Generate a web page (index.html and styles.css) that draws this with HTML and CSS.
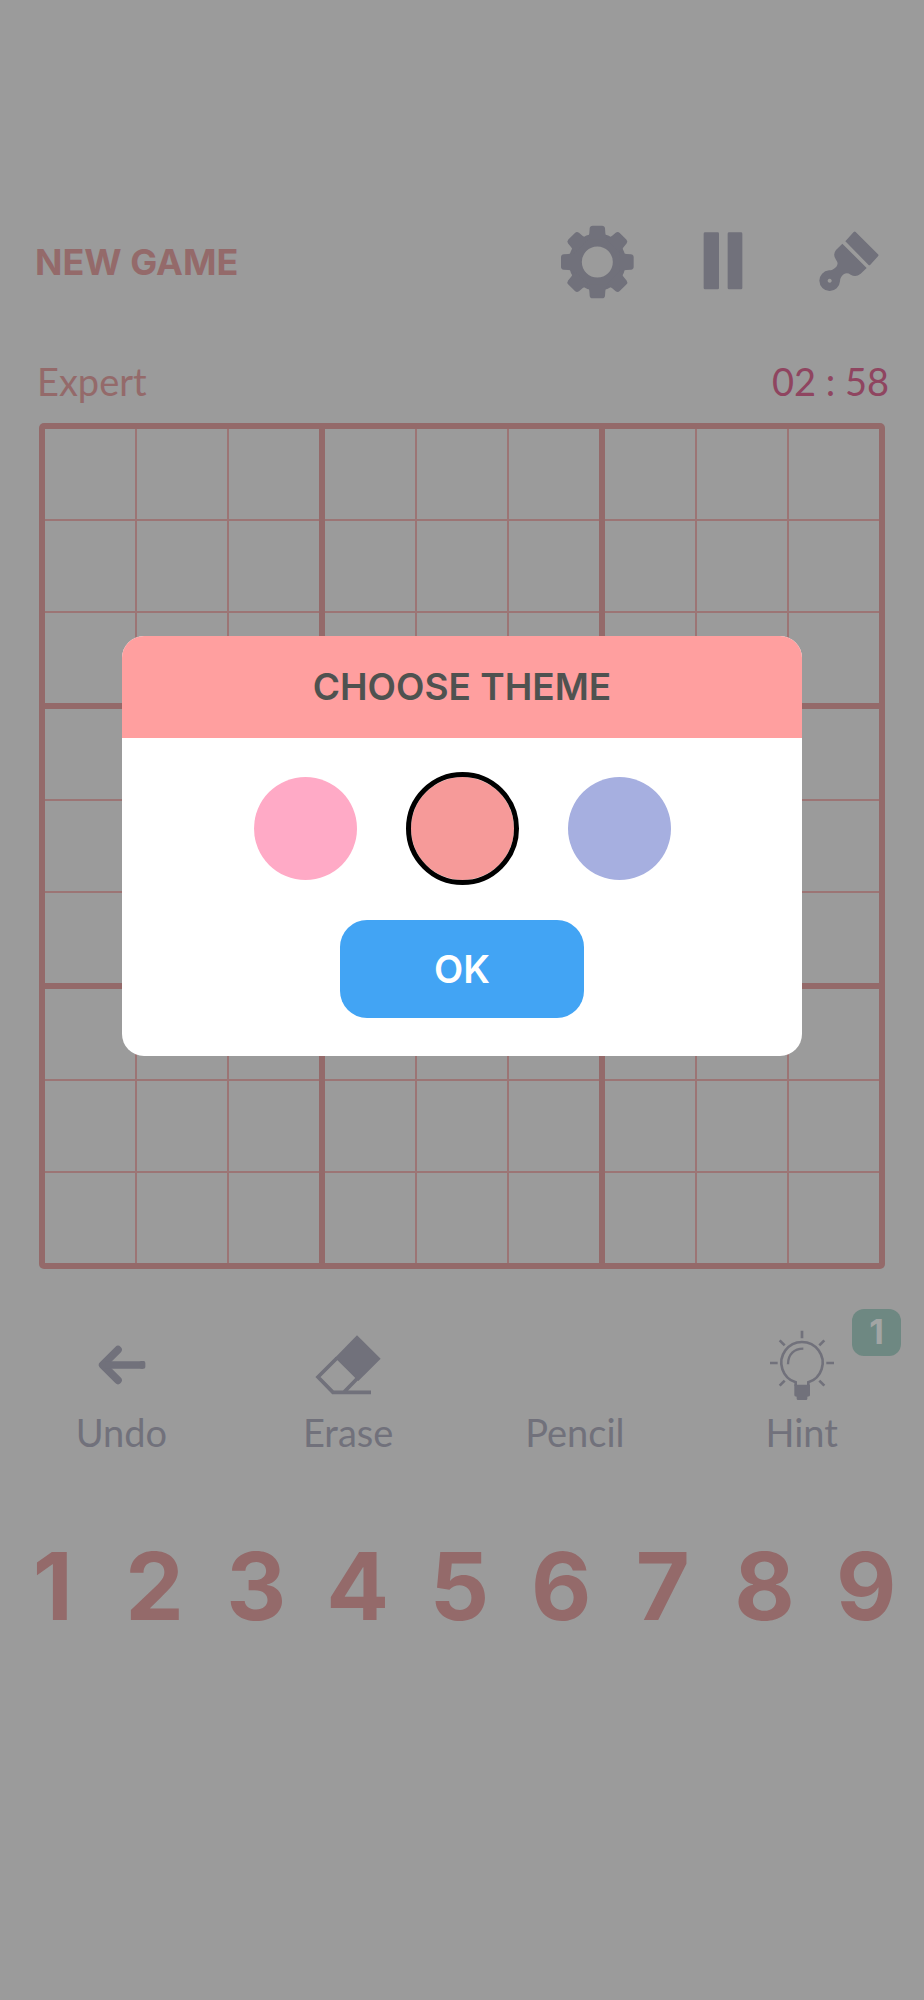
FILE: index.html
```html
<!DOCTYPE html>
<html lang="en">
<head>
<meta charset="utf-8">
<meta name="viewport" content="width=device-width, initial-scale=1">
<title>Sudoku</title>
<link rel="stylesheet" href="styles.css">
</head>
<body>
<main class="game">
  <header class="topbar">
    <button class="new-game" type="button">NEW GAME</button>
    <div class="actions">
      <button class="icon-button" type="button" aria-label="Settings">
        <svg class="icon" viewBox="60 73 228 228">
          <defs><path id="tooth" d="M140 120 Q150 113 151 100 L152 86 Q153 78 161 78 H189 Q197 78 198 86 L199 100 Q200 113 210 120 Z"/></defs>
          <circle cx="175" cy="187" r="66" fill="none" stroke="currentColor" stroke-width="39"/>
          <g fill="currentColor">
            <use href="#tooth"/>
            <use href="#tooth" transform="rotate(45 175 187)"/>
            <use href="#tooth" transform="rotate(90 175 187)"/>
            <use href="#tooth" transform="rotate(135 175 187)"/>
            <use href="#tooth" transform="rotate(180 175 187)"/>
            <use href="#tooth" transform="rotate(225 175 187)"/>
            <use href="#tooth" transform="rotate(270 175 187)"/>
            <use href="#tooth" transform="rotate(315 175 187)"/>
          </g>
        </svg>
      </button>
      <button class="icon-button" type="button" aria-label="Pause">
        <svg class="icon" viewBox="435 73 228 228" fill="currentColor">
          <rect x="491" y="98" width="46" height="171" rx="4"/>
          <rect x="563" y="98" width="44" height="171" rx="4"/>
        </svg>
      </button>
      <button class="icon-button" type="button" aria-label="Theme">
        <svg class="icon" viewBox="814 73 228 228" fill="currentColor">
          <path d="M942 97 Q945 94 948 97 L1015 164 Q1018 167 1015 170 L992 195 Q989 198 986 195 L917 125 Z"/>
          <path fill-rule="evenodd" d="M908 132 L981 205 L963 222 Q948 235 933 225 Q922 217 912 224 Q901 233 901 245 A31 31 0 1 1 868 212 Q880 212 890 201 Q898 192 889 180 Q878 165 889 151 Z M870 237 a6 6 0 1 0 .1 0 Z"/>
        </svg>
      </button>
    </div>
  </header>

  <div class="status">
    <span class="level">Expert</span>
    <span class="timer">02 : 58</span>
  </div>

  <div class="board" role="img" aria-label="Sudoku board">
    <div class="block"><i></i><i></i><i></i><i></i><i></i><i></i><i></i><i></i><i></i></div>
    <div class="block"><i></i><i></i><i></i><i></i><i></i><i></i><i></i><i></i><i></i></div>
    <div class="block"><i></i><i></i><i></i><i></i><i></i><i></i><i></i><i></i><i></i></div>
    <div class="block"><i></i><i></i><i></i><i></i><i></i><i></i><i></i><i></i><i></i></div>
    <div class="block"><i></i><i></i><i></i><i></i><i></i><i></i><i></i><i></i><i></i></div>
    <div class="block"><i></i><i></i><i></i><i></i><i></i><i></i><i></i><i></i><i></i></div>
    <div class="block"><i></i><i></i><i></i><i></i><i></i><i></i><i></i><i></i><i></i></div>
    <div class="block"><i></i><i></i><i></i><i></i><i></i><i></i><i></i><i></i><i></i></div>
    <div class="block"><i></i><i></i><i></i><i></i><i></i><i></i><i></i><i></i><i></i></div>
  </div>

  <div class="tools">
    <button class="tool" type="button">
      <svg class="tool-icon" viewBox="256 267 216 216" fill="none" stroke="currentColor" stroke-width="23" stroke-linecap="round" stroke-linejoin="round">
        <path d="M355 329 L309 375 L355 421"/>
        <path d="M318 375 H430" stroke-linecap="butt"/>
        <rect x="420" y="363" width="17" height="23" rx="5" fill="currentColor" stroke="none"/>
      </svg>
      <span>Undo</span>
    </button>
    <button class="tool" type="button">
      <svg class="tool-icon" viewBox="937 267 216 216">
        <path fill="currentColor" d="M1072 286 L1143 356 L1076 423 L1006 353 Z"/>
        <path fill="none" stroke="currentColor" stroke-width="11" d="M1012 354 L955 411 L1000 457 H1114 M1072 416 L1034 455"/>
      </svg>
      <span>Erase</span>
    </button>
    <button class="tool" type="button">
      <span class="tool-icon"></span>
      <span>Pencil</span>
    </button>
    <button class="tool" type="button">
      <svg class="tool-icon" viewBox="797 267 216 216" fill="none" stroke="currentColor" stroke-width="8">
        <path d="M886 437 V427 A62 62 0 1 1 924 427 V437"/>
        <path stroke-width="7" d="M863 373 C863 342 882 326 909 326"/>
        <path d="M905 272 V295 M809 369 H832 M978 369 H1001 M838 301 L853 316 M972 301 L957 316 M838 437 L853 422 M972 437 L957 422"/>
        <path fill="currentColor" stroke="none" d="M882 434 H929 V466 Q929 470 921 470 V476 Q921 480 917 480 H893 Q889 480 889 476 V470 Q882 470 882 466 Z"/>
      </svg>
      <span>Hint</span>
      <span class="badge">1</span>
    </button>
  </div>

  <div class="digits">
    <button type="button">1</button>
    <button type="button">2</button>
    <button type="button">3</button>
    <button type="button">4</button>
    <button type="button">5</button>
    <button type="button">6</button>
    <button type="button">7</button>
    <button type="button">8</button>
    <button type="button">9</button>
  </div>
</main>

<div class="overlay">
  <form class="dialog" role="dialog" aria-labelledby="dialog-title">
    <h2 class="dialog-title" id="dialog-title">CHOOSE THEME</h2>
    <div class="dialog-body">
      <div class="swatches">
        <input class="swatch pink" type="radio" name="theme" aria-label="Pink">
        <input class="swatch coral" type="radio" name="theme" aria-label="Coral" checked>
        <input class="swatch blue" type="radio" name="theme" aria-label="Blue">
      </div>
      <button class="ok" type="button">OK</button>
    </div>
  </form>
</div>
</body>
</html>
```
FILE: styles.css
```css
:root {
  --page: #9b9b9b;
  --accent: #946a6a;
  --line: #9c7575;
  --ink: #71717b;
}

* {
  box-sizing: border-box;
}

body {
  margin: 0;
  min-height: 100vh;
  background: var(--page);
  font-family: Lato, sans-serif;
  font-size: 38px;
  line-height: 46px;
}

button {
  padding: 0;
  border: 0;
  background: none;
  color: inherit;
  font: inherit;
}

svg {
  display: block;
}

.game {
  padding-top: 224px;
}

.topbar {
  display: flex;
  align-items: center;
  justify-content: space-between;
  padding: 0 37px 0 35px;
}

.new-game {
  color: var(--accent);
  font: 700 36px/46px Inter, sans-serif;
}

.actions {
  display: flex;
  gap: 50px;
  color: var(--ink);
}

.icon {
  width: 76px;
  height: 76px;
}

.status {
  display: flex;
  justify-content: space-between;
  margin-top: 58px;
  padding: 0 35px 0 37px;
}

.level {
  color: var(--accent);
}

.timer {
  color: #8f4560;
}

.board {
  display: grid;
  grid-template: repeat(3, 1fr) / repeat(3, 1fr);
  gap: 6px;
  margin: 19px 39px 0;
  padding: 6px;
  aspect-ratio: 1;
  border-radius: 5px;
  background: var(--accent);
}

.block {
  display: grid;
  grid-template: repeat(3, 1fr) / repeat(3, 1fr);
  gap: 2px;
  background: var(--line);
}

.block i {
  background: var(--page);
}

.tools {
  display: grid;
  grid-template-columns: repeat(4, 1fr);
  margin-top: 40px;
  padding: 0 9px 0 8px;
  color: var(--ink);
}

.tool {
  position: relative;
  display: flex;
  flex-direction: column;
  align-items: center;
  gap: 8px;
  padding-top: 20px;
}

.tool-icon {
  width: 72px;
  height: 72px;
}

.badge {
  position: absolute;
  top: 0;
  right: 14px;
  width: 49px;
  height: 47px;
  border-radius: 12px;
  background: #6e8882;
  color: #a2a5a4;
  font: 700 34px/45px Inter, sans-serif;
  text-align: center;
}

.digits {
  display: grid;
  grid-template-columns: repeat(9, 1fr);
  margin-top: 75px;
  padding: 0 7px 0 2px;
  color: var(--accent);
  font: 700 93px/112px Inter, sans-serif;
}

.overlay {
  position: absolute;
  inset: 0;
  display: flex;
  align-items: center;
  justify-content: center;
  padding: 0 122px 308px;
}

.dialog {
  flex: 1;
  overflow: hidden;
  border-radius: 22px;
  background: #fff;
}

.dialog-title {
  margin: 0;
  padding: 28px 0;
  background: #ff9f9f;
  color: #4f5250;
  font: 600 37px/46px Inter, sans-serif;
  text-align: center;
}

.dialog-body {
  display: flex;
  flex-direction: column;
  align-items: center;
  gap: 35px;
  padding: 34px 0 38px;
}

.swatches {
  display: flex;
  gap: 44px;
}

.swatch {
  width: 113px;
  height: 113px;
  margin: 0;
  border: 5px solid transparent;
  border-radius: 50%;
  background-clip: padding-box;
  appearance: none;
}

.swatch:checked {
  border-color: #000;
}

.pink {
  background-color: #ffaac6;
}

.coral {
  background-color: #f69a99;
}

.blue {
  background-color: #a6afe0;
}

.ok {
  width: 244px;
  height: 98px;
  border-radius: 27px;
  background: #42a4f4;
  color: #fff;
  font: 600 38px/46px Inter, sans-serif;
}
```
